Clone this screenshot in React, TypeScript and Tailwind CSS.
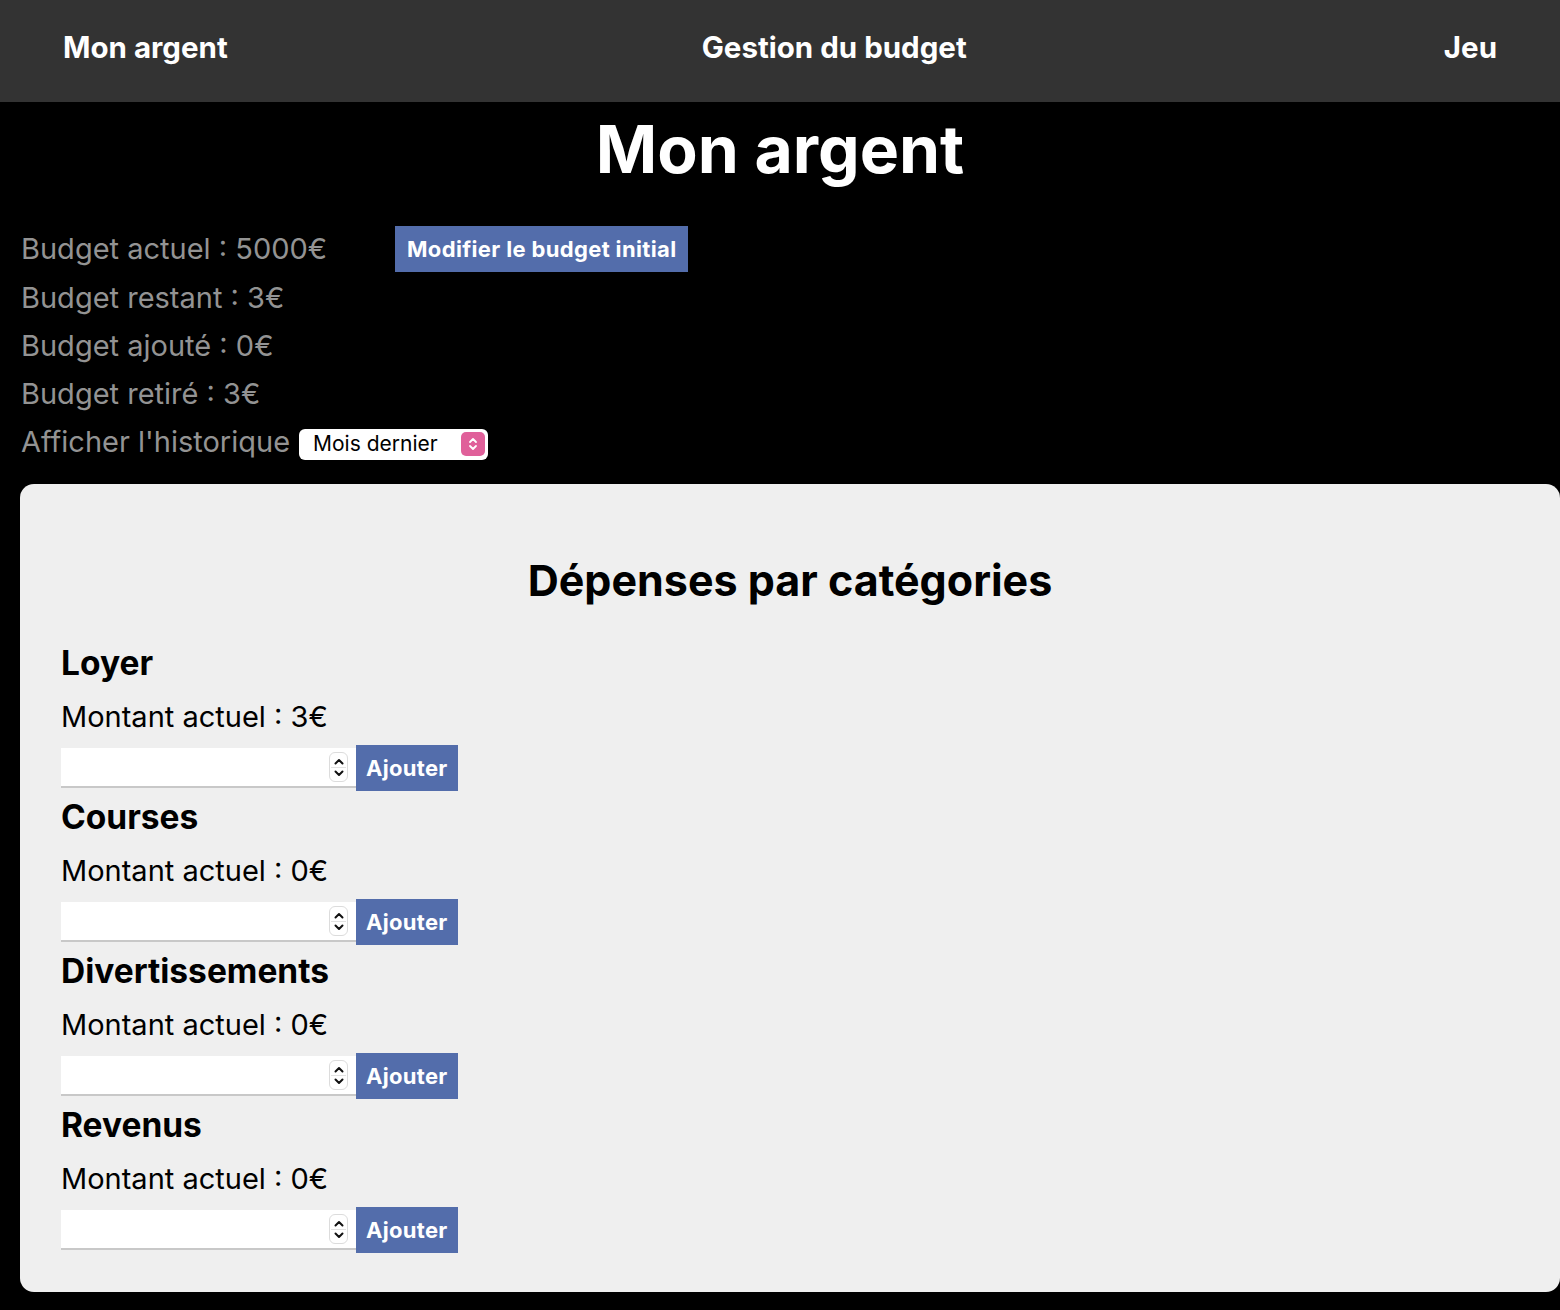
import React from "react";

function Spinner() {
  return (
    <div className="flex flex-col items-center justify-center w-[19px] h-[30px] rounded-[6px] border border-[#dcdcdc] bg-white mr-[8px]">
      <svg width="12" height="9" viewBox="0 0 12 9"><path d="M2.5 6.5 L6 3 L9.5 6.5" stroke="#111" strokeWidth="2" fill="none" strokeLinecap="round" strokeLinejoin="round"/></svg>
      <div className="w-[15px] h-px bg-[#e2e2e2] my-[1px]" />
      <svg width="12" height="9" viewBox="0 0 12 9"><path d="M2.5 2.5 L6 6 L9.5 2.5" stroke="#111" strokeWidth="2" fill="none" strokeLinecap="round" strokeLinejoin="round"/></svg>
    </div>
  );
}

function Category({ name, amount }: { name: string; amount: string }) {
  return (
    <div className="flex flex-col">
      <div className="text-[33.5px] font-bold leading-[40px] text-black">{name}</div>
      <div className="text-[29px] leading-[36px] mt-[16px] text-black">Montant actuel : {amount}</div>
      <div className="flex items-center mt-[10px]">
        <div className="w-[295px] h-[40px] bg-white border-b-2 border-[#c8c8c8] flex items-center justify-end">
          <Spinner />
        </div>
        <button className="h-[46px] px-[10px] bg-[#536dab] text-white text-[22px] font-bold tracking-[0.3px]">
          Ajouter
        </button>
      </div>
    </div>
  );
}

export default function App() {
  return (
    <div className="min-h-[1310px] bg-black font-['Inter',sans-serif]">
      <header className="h-[102px] bg-[#333333] flex items-center pl-[63px] pr-[63px] pb-[7px] text-white text-[29.5px] font-bold">
        <span>Mon argent</span>
        <span className="ml-[474px]">Gestion du budget</span>
        <span className="ml-auto">Jeu</span>
      </header>
      <h1 className="text-center text-white text-[66px] font-bold leading-[90px] mt-[2px]">Mon argent</h1>
      <div className="pl-[21px] mt-[30px] text-[#939393] text-[29px] font-normal">
        <div className="flex items-center h-[50px]">
          <span className="w-[374px]">Budget actuel : 5000€</span>
          <button className="h-[46px] px-[12px] bg-[#536dab] text-white text-[22px] font-bold tracking-[0.35px]">
            Modifier le budget initial
          </button>
        </div>
        <div className="h-[48px] flex items-center">Budget restant : 3€</div>
        <div className="h-[48px] flex items-center">Budget ajouté : 0€</div>
        <div className="h-[48px] flex items-center">Budget retiré : 3€</div>
        <div className="h-[48px] flex items-center">
          <span>Afficher l'historique</span>
          <div className="ml-[9px] mt-[4px] w-[189px] h-[31px] bg-white rounded-[6px] flex items-center justify-between pl-[14px] pr-[3px] text-black text-[21px] font-normal">
            <span>Mois dernier</span>
            <div className="w-[24px] h-[24px] rounded-[5px] bg-[#e0609a] flex flex-col items-center justify-center">
              <svg width="12" height="16" viewBox="0 0 12 16"><path d="M3 6 L6 3 L9 6 M3 10 L6 13 L9 10" stroke="white" strokeWidth="1.8" fill="none" strokeLinecap="round" strokeLinejoin="round"/></svg>
            </div>
          </div>
        </div>
      </div>
      <div className="ml-[20px] mt-[18px] bg-[#efefef] rounded-[14px] min-h-[808px] pt-[71px]">
        <h2 className="text-center text-[43px] font-bold text-black leading-[50px]">Dépenses par catégories</h2>
        <div className="mt-[38px] pl-[41px] flex flex-col gap-[6px]">
          <Category name="Loyer" amount="3€" />
          <Category name="Courses" amount="0€" />
          <Category name="Divertissements" amount="0€" />
          <Category name="Revenus" amount="0€" />
        </div>
      </div>
    </div>
  );
}
